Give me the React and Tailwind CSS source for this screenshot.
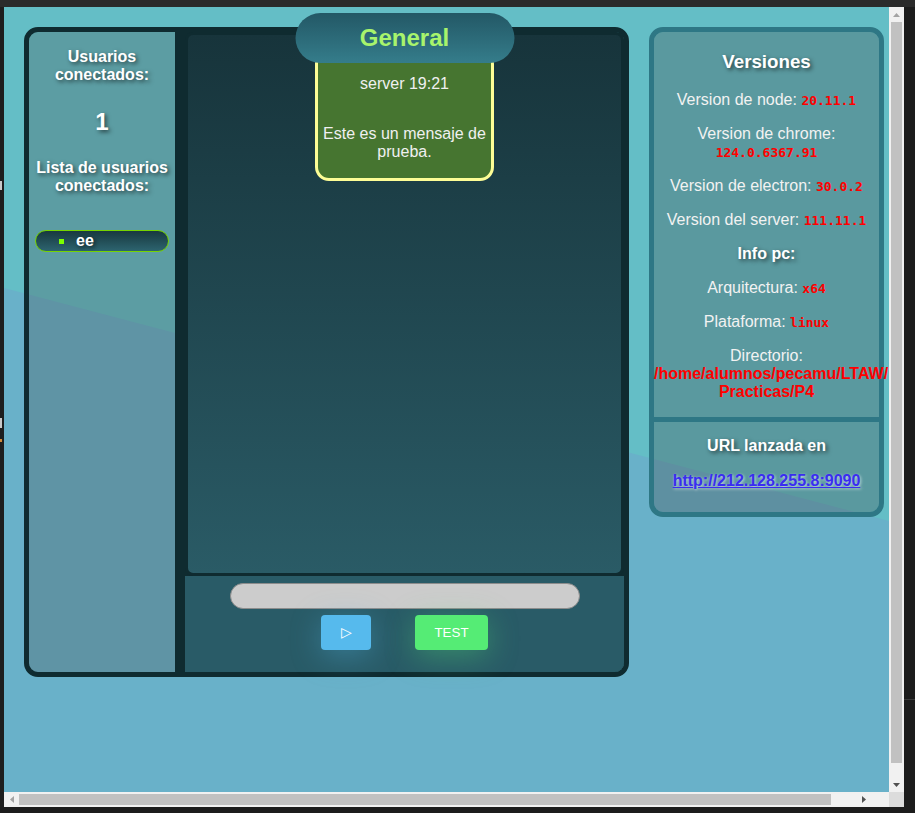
import React from "react";

const shadow = "[text-shadow:2px_2px_4px_rgba(0,0,0,0.6)]";
const mono = "font-['DejaVu_Sans_Mono',monospace] text-[13px] leading-none font-bold text-[#ff0000]";

const versions = [
  { label: "Version de node:", value: "20.11.1" },
  { label: "Version de chrome:", value: "124.0.6367.91" },
  { label: "Version de electron:", value: "30.0.2" },
  { label: "Version del server:", value: "111.11.1" },
];

const pcInfo = [
  { label: "Arquitectura:", value: "x64" },
  { label: "Plataforma:", value: "linux" },
];

function Sidebar() {
  return (
    <aside className="w-[146px] shrink-0 bg-[rgba(70,70,70,0.27)] rounded-l-[9px] text-center text-white pt-[16px]">
      <h3 className={`text-[16px] leading-[18px] font-bold ${shadow}`}>
        Usuarios
        <br />
        conectados:
      </h3>
      <p className={`mt-[24px] text-[24px] leading-[28px] font-bold ${shadow}`}>1</p>
      <h3 className={`mt-[23px] text-[16px] leading-[18px] font-bold ${shadow}`}>
        Lista de usuarios
        <br />
        conectados:
      </h3>
      <ul className="mt-[35px] mx-[6px]">
        <li className="h-[22px] rounded-full border border-[#76d400] bg-linear-to-b from-[#18393f] to-[#2d6470] flex items-center pl-[23px]">
          <span className="w-[5px] h-[5px] bg-[#7cff00]" />
          <span className={`ml-[12px] text-[16px] font-bold ${shadow}`}>ee</span>
        </li>
      </ul>
    </aside>
  );
}

function ChatColumn() {
  return (
    <section className="relative flex-1 flex flex-col border-l-[10px] border-[#0f2b30] bg-[#0f2b30] rounded-r-[9px]">
      <div className="absolute top-[-19px] left-1/2 -translate-x-1/2 z-10 w-[219px] h-[50px] rounded-full bg-linear-to-b from-[#235866] to-[#357d8b] flex items-center justify-center">
        <span className="text-[24px] font-bold text-[#a8f46c]">General</span>
      </div>

      <div className="h-[544px] border-[3px] border-[#0f2b30] rounded-[8px] bg-linear-to-b from-[#17343b] to-[#2a5b66] flex flex-col items-center overflow-hidden">
        <div className="mt-[15px] w-[179px] border-[3px] border-[#fdfd96] rounded-[14px] bg-[#467530] text-center text-[#f0f0f0] text-[16px] leading-[18px] px-[2px] pt-[22px] pb-[17px]">
          <p>server 19:21</p>
          <p className="mt-[32px]">Este es un mensaje de prueba.</p>
        </div>
      </div>

      <div className="flex-1 bg-[#295b67] rounded-br-[9px] flex flex-col items-center pt-[7px]">
        <input
          type="text"
          className="w-[350px] h-[26px] rounded-full bg-[#cccccc] border border-[#8c8c8c] outline-none px-3"
        />
        <div className="mt-[6px] flex gap-[44px]">
          <button className="w-[50px] h-[35px] rounded-[4px] bg-[#56baed] text-white text-[14px] shadow-[0_6px_30px_rgba(86,186,237,0.35)]">
            ▷
          </button>
          <button className="w-[73px] h-[35px] rounded-[4px] bg-[#55ec75] text-white text-[13.33px] shadow-[0_6px_30px_rgba(85,236,117,0.35)]">
            TEST
          </button>
        </div>
      </div>
    </section>
  );
}

function InfoCard() {
  return (
    <div className="w-[235px] shrink-0 border-[5px] border-[#2e7785] rounded-[14px] text-center text-[#f2f2f2] text-[16px] leading-[18px]">
      <div className="bg-[rgba(70,70,70,0.3)] rounded-t-[9px] pt-[19px] pb-[16px]">
        <h3 className={`text-[18.72px] leading-[22px] font-bold text-white ${shadow}`}>Versiones</h3>
        <div className="mt-[18px] flex flex-col gap-4">
          {versions.map((v) => (
            <p key={v.label}>
              {v.label} <code className={mono}>{v.value}</code>
            </p>
          ))}
          <p className={`font-bold text-white ${shadow}`}>Info pc:</p>
          {pcInfo.map((v) => (
            <p key={v.label}>
              {v.label} <code className={mono}>{v.value}</code>
            </p>
          ))}
          <p>
            Directorio:
            <span className="block whitespace-nowrap font-bold text-[#ff0000]">/home/alumnos/pecamu/LTAW/</span>
            <span className="block whitespace-nowrap font-bold text-[#ff0000]">Practicas/P4</span>
          </p>
        </div>
      </div>
      <div className="border-t-[5px] border-[#2e7785] bg-[rgba(70,70,70,0.3)] rounded-b-[9px] pt-[15px] pb-[22px]">
        <p className={`font-bold text-white ${shadow}`}>URL lanzada en</p>
        <p className="mt-[17px]">
          <a
            href="#"
            className="font-bold text-[#3a2df0] underline [text-shadow:1px_1px_3px_rgba(255,255,255,0.7)]"
          >
            http://212.128.255.8:9090
          </a>
        </p>
      </div>
    </div>
  );
}

function Arrow({ dir, color }) {
  const pts = {
    up: "0,4 3.5,0 7,4",
    down: "0,0 7,0 3.5,4",
    left: "4,0 4,7 0,3.5",
    right: "0,0 4,3.5 0,7",
  }[dir];
  const horiz = dir === "left" || dir === "right";
  return (
    <svg width={horiz ? 4 : 7} height={horiz ? 7 : 4} viewBox={horiz ? "0 0 4 7" : "0 0 7 4"}>
      <polygon points={pts} fill={color} />
    </svg>
  );
}

export default function App() {
  return (
    <div className="w-[915px] h-[813px] bg-[#1c1c1c] flex flex-col overflow-hidden font-['Liberation_Sans',Arial,sans-serif]">
      <div className="h-[7px] shrink-0 bg-[#2b2b2b]" />

      <div className="flex h-[785px] shrink-0">
        {/* strip of the window behind */}
        <div className="w-[4px] bg-[#1e1e1e] flex flex-col">
          <div className="h-[174px]" />
          <div className="w-[2px] h-[9px] bg-[#c8c8c8]" />
          <div className="h-[228px]" />
          <div className="w-[2px] h-[10px] bg-[#c8c8c8]" />
          <div className="h-[11px]" />
          <div className="w-[2px] h-[3px] bg-[#d08a3a]" />
        </div>

        <main className="relative w-[885px] h-full overflow-hidden bg-[#64bec6]">
          <svg className="absolute inset-0" width="885" height="785" viewBox="0 0 885 785">
            <polygon points="0,281 885,514 885,785 0,785" fill="#69b1c9" />
          </svg>
          <div className="relative flex items-start gap-5 p-5">
            <div className="relative w-[605px] h-[650px] shrink-0 border-[5px] border-[#0f2b30] rounded-[14px] flex">
              <Sidebar />
              <ChatColumn />
            </div>
            <InfoCard />
          </div>
        </main>

        <div className="w-[15px] bg-[#f1f1f1] flex flex-col">
          <div className="h-[15px] flex items-center justify-center">
            <Arrow dir="up" color="#a3a3a3" />
          </div>
          <div className="mx-[2px] h-[741px] bg-[#c1c1c1]" />
          <div className="flex-1 flex items-end justify-center pb-[5px]">
            <Arrow dir="down" color="#505050" />
          </div>
        </div>

        <div className="w-[11px] bg-[#1c1c1c] flex flex-col">
          <div className="h-[692px]" />
          <div className="h-px bg-[#3a3a3a]" />
        </div>
      </div>

      <div className="flex h-[15px] shrink-0">
        <div className="w-[4px] bg-[#1e1e1e]" />
        <div className="w-[885px] bg-[#f1f1f1] flex items-center">
          <div className="w-[15px] flex justify-center">
            <Arrow dir="left" color="#a3a3a3" />
          </div>
          <div className="w-[812px] h-[11px] bg-[#c1c1c1]" />
          <div className="flex-1 flex justify-center pl-[8px]">
            <Arrow dir="right" color="#505050" />
          </div>
        </div>
        <div className="w-[15px] bg-[#dcdcdc]" />
        <div className="w-[11px] bg-[#1c1c1c]" />
      </div>

      <div className="flex-1 bg-[#1c1c1c]" />
    </div>
  );
}
